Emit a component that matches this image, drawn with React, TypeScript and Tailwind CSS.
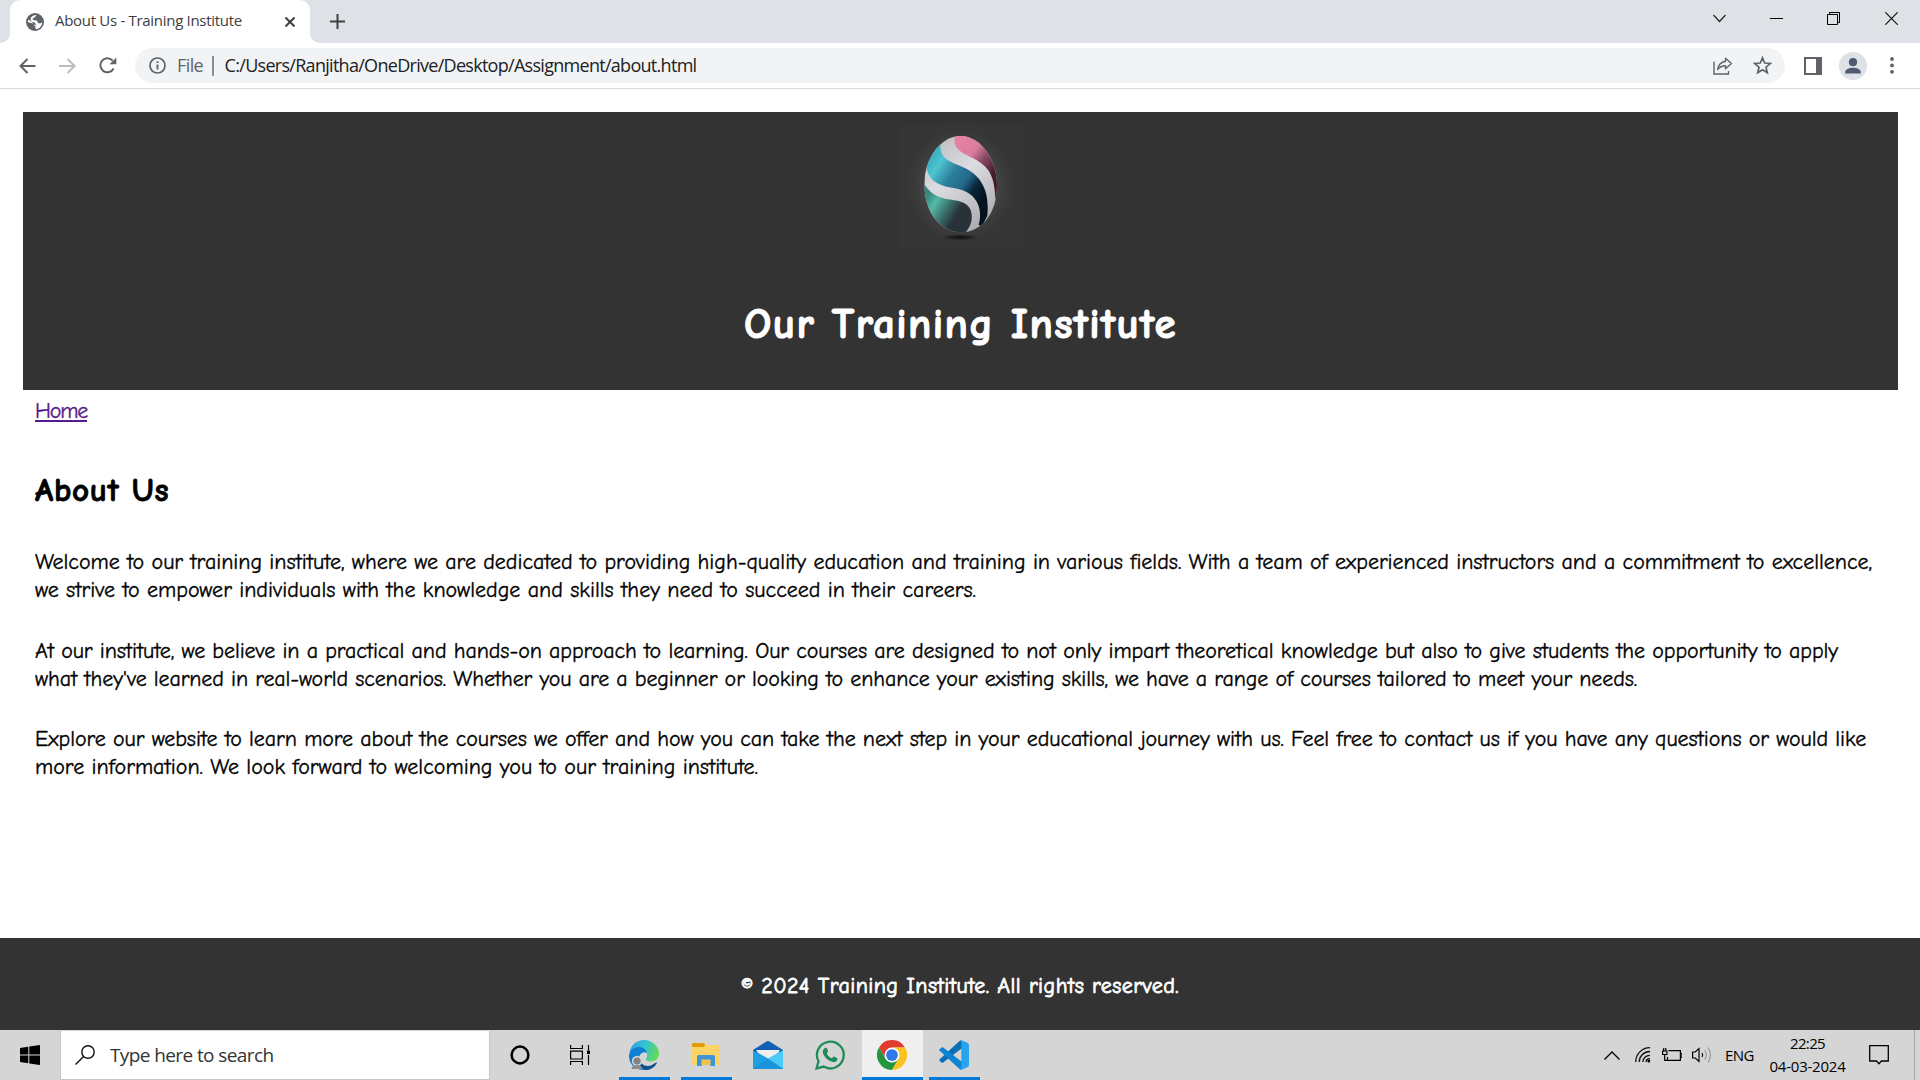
import React from "react";

const COMIC = "font-['Comic_Neue','Open_Sans',sans-serif]";

const paragraphs = [
  [
    {
      text: "Welcome to our training institute, where we are dedicated to providing high-quality education and training in various fields. With a team of experienced instructors and a commitment to excellence,",
      tracking: "tracking-[-0.031px]",
    },
    {
      text: "we strive to empower individuals with the knowledge and skills they need to succeed in their careers.",
      tracking: "tracking-[-0.004px]",
    },
  ],
  [
    {
      text: "At our institute, we believe in a practical and hands-on approach to learning. Our courses are designed to not only impart theoretical knowledge but also to give students the opportunity to apply",
      tracking: "tracking-[-0.091px]",
    },
    {
      text: "what they've learned in real-world scenarios. Whether you are a beginner or looking to enhance your existing skills, we have a range of courses tailored to meet your needs.",
      tracking: "tracking-[-0.115px]",
    },
  ],
  [
    {
      text: "Explore our website to learn more about the courses we offer and how you can take the next step in your educational journey with us. Feel free to contact us if you have any questions or would like",
      tracking: "tracking-[-0.068px]",
    },
    {
      text: "more information. We look forward to welcoming you to our training institute.",
      tracking: "tracking-[0.011px]",
    },
  ],
];

function TabStrip() {
  return (
    <div className="flex h-[43px] items-start bg-[#dee1e6]">
      <div className="h-[43px] w-[10px] bg-white">
        <div className="h-full rounded-br-[10px] bg-[#dee1e6]" />
      </div>
      <div className="flex h-[43px] w-[300px] items-center rounded-t-[10px] bg-white pl-4 pr-[15px]">
        <svg className="size-[18px] shrink-0" viewBox="0 0 18 18">
          <circle cx="9" cy="9" r="9" fill="#5f6368" />
          <path d="M10.6 1.9C9 3 9.8 4.2 7.8 4.8C6.2 5.2 6.6 6.6 7.4 7.1C8.6 7.8 10.2 7 11.2 8.2C12.2 9.3 11.4 10 12.6 10.2C14.6 10.4 15.2 9.6 16.2 9.4C15.9 13 13.4 15.8 9.8 16.2L9.3 13.6C8 13.4 8.7 11.2 7.2 10.6C5.2 9.8 3.6 9.6 1.8 9.2L2.2 6.6L6 9.3C7.4 9.5 6.7 11.3 8.4 11.6C9.8 11.9 9.6 13 10.6 13.3C9.9 10.5 8.8 9 6.2 8.7C4 8.3 4.4 5.4 5.4 3.9C7 2.4 8.8 1.9 10.6 1.9Z" fill="#fff" />
        </svg>
        <span className="ml-[11px] mt-[-3px] whitespace-nowrap text-[15px] leading-5 tracking-[-0.3px] text-[#3c4043]">
          About Us - Training Institute
        </span>
        <svg className="ml-auto size-[10px]" viewBox="0 0 10 10">
          <path d="M0.5 0.5L9.5 9.5M9.5 0.5L0.5 9.5" stroke="#3c4043" strokeWidth="2" />
        </svg>
      </div>
      <div className="h-[43px] w-[10px] bg-white">
        <div className="h-full rounded-bl-[10px] bg-[#dee1e6]" />
      </div>
      <svg className="ml-[10px] mt-[14px] size-[15px]" viewBox="0 0 15 15">
        <path d="M7.5 0V15M0 7.5H15" stroke="#3c4043" strokeWidth="2" />
      </svg>
      <svg className="ml-auto mt-[14px] h-[9px] w-[13px]" viewBox="0 0 13 9">
        <path d="M0.5 1L6.5 7.5L12.5 1" fill="none" stroke="#222" strokeWidth="1.2" />
      </svg>
      <div className="ml-[44px] mt-[18px] h-px w-[13px] bg-black" />
      <svg className="ml-[44px] mt-3 size-[13px]" viewBox="0 0 13 13">
        <path d="M2.5 2.5V0.5H12.5V10.5H10.5M0.5 2.5H10.5V12.5H0.5Z" fill="none" stroke="#000" />
      </svg>
      <svg className="ml-[45px] mr-[22px] mt-3 size-[13px]" viewBox="0 0 13 13">
        <path d="M0.3 0.3L12.7 12.7M12.7 0.3L0.3 12.7" stroke="#111" strokeWidth="1.2" />
      </svg>
    </div>
  );
}

function Toolbar() {
  return (
    <div className="flex h-[46px] items-center border-b border-[#d9dbde] bg-white pl-[19px]">
      <svg className="h-4 w-[17px]" viewBox="0 0 17 16" fill="none" stroke="#5f6368" strokeWidth="2">
        <path d="M16.5 8H2M8.5 1L1.5 8L8.5 15" />
      </svg>
      <svg className="ml-[23px] h-4 w-[17px]" viewBox="0 0 17 16" fill="none" stroke="#babcbe" strokeWidth="2">
        <path d="M0 8H15M8.5 1L15.5 8L8.5 15" />
      </svg>
      <svg className="ml-[23px] h-[17px] w-[18px]" viewBox="0 0 18 17">
        <path d="M14.6 11.5A7 7 0 1 1 13.6 3.6" fill="none" stroke="#5f6368" strokeWidth="2" />
        <path d="M17.3 0.5V7.3H10.5Z" fill="#5f6368" />
      </svg>
      <div className="ml-[18px] flex h-[35px] w-[1650px] items-center rounded-full bg-[#f1f3f4] pl-[14px] pr-[13px]">
        <svg className="size-[17px] shrink-0" viewBox="0 0 17 17">
          <circle cx="8.5" cy="8.5" r="7.5" fill="none" stroke="#5f6368" strokeWidth="1.7" />
          <path d="M8.5 7.5V12.5M8.5 4.3V6.1" stroke="#5f6368" strokeWidth="1.9" />
        </svg>
        <span className="-mt-px ml-[11px] text-[18px] leading-6 tracking-[-0.6px] text-[#5f6368]">File</span>
        <div className="ml-[9px] h-5 w-[1.5px] bg-[#8b8f93]" />
        <span className="-mt-px ml-[11px] whitespace-nowrap text-[18px] leading-6 tracking-[-0.71px] text-[#202124]">
          C:/Users/Ranjitha/OneDrive/Desktop/Assignment/about.html
        </span>
        <svg className="ml-auto h-[18px] w-5" viewBox="0 0 20 18" fill="none" stroke="#5f6368" strokeWidth="1.4">
          <path d="M1 4.5V17H15.5V14" />
          <path d="M12.5 1.2L18.5 6.5L12.5 11.8V8.8C9 8.8 6.5 10 4.6 12.6C5.2 8.2 8 5 12.5 4.2Z" strokeLinejoin="round" />
        </svg>
        <svg className="ml-5 size-[19px]" viewBox="0 0 19 19">
          <path d="M9.5 1.8L11.7 7L17.3 7.5L13 11.2L14.3 16.7L9.5 13.8L4.7 16.7L6 11.2L1.7 7.5L7.3 7Z" fill="none" stroke="#5f6368" strokeWidth="1.7" />
        </svg>
      </div>
      <div className="ml-[19px] flex h-[18px] w-[18px] border-2 border-r-[6px] border-[#5f6368]" />
      <svg className="ml-[17px] size-7" viewBox="0 0 28 28">
        <circle cx="14" cy="14" r="14" fill="#dee1e6" />
        <circle cx="14" cy="10.2" r="4.1" fill="#4f5b70" />
        <path d="M6.2 21.5V20C6.2 17.2 10.8 15.7 14 15.7S21.8 17.2 21.8 20V21.5Z" fill="#4f5b70" />
      </svg>
      <svg className="ml-[23px] h-[17px] w-1" viewBox="0 0 4 17" fill="#5f6368">
        <circle cx="2" cy="2" r="1.9" />
        <circle cx="2" cy="8.4" r="1.9" />
        <circle cx="2" cy="14.8" r="1.9" />
      </svg>
    </div>
  );
}

function EggLogo() {
  return (
    <svg className="size-[125px]" viewBox="114 72 375 375">
      <defs>
        <radialGradient id="glow">
          <stop offset="0" stopColor="#4a4a4a" />
          <stop offset="0.65" stopColor="#414141" />
          <stop offset="1" stopColor="#353536" stopOpacity="0" />
        </radialGradient>
        <linearGradient id="pink" x1="300" y1="130" x2="405" y2="215" gradientUnits="userSpaceOnUse">
          <stop offset="0" stopColor="#e580a2" />
          <stop offset="0.35" stopColor="#dd7d9d" />
          <stop offset="0.62" stopColor="#8a4a66" />
          <stop offset="1" stopColor="#421a2c" />
        </linearGradient>
        <linearGradient id="teal" x1="205" y1="175" x2="375" y2="290" gradientUnits="userSpaceOnUse">
          <stop offset="0" stopColor="#36aebd" />
          <stop offset="0.18" stopColor="#4fc3d0" />
          <stop offset="0.42" stopColor="#2b7f9c" />
          <stop offset="0.64" stopColor="#24678a" />
          <stop offset="0.8" stopColor="#08263b" />
          <stop offset="1" stopColor="#03131c" />
        </linearGradient>
        <linearGradient id="green" x1="200" y1="290" x2="290" y2="345" gradientUnits="userSpaceOnUse">
          <stop offset="0" stopColor="#36887b" />
          <stop offset="0.3" stopColor="#55b9a6" />
          <stop offset="0.6" stopColor="#3c7d75" />
          <stop offset="1" stopColor="#283238" />
        </linearGradient>
        <linearGradient id="band" x1="220" y1="120" x2="400" y2="380" gradientUnits="userSpaceOnUse">
          <stop offset="0" stopColor="#bcbcc1" />
          <stop offset="0.4" stopColor="#dddde1" />
          <stop offset="1" stopColor="#a4a5a9" />
        </linearGradient>
        <radialGradient id="shade">
          <stop offset="0" stopColor="#121212" />
          <stop offset="0.5" stopColor="#202020" />
          <stop offset="1" stopColor="#333" stopOpacity="0" />
        </radialGradient>
        <clipPath id="egg">
          <path d="M302 108C362 108 411 180 411 256C411 340 365 397 304 397C240 397 193 335 193 252C193 178 240 108 302 108Z" />
        </clipPath>
      </defs>
      <rect x="114" y="72" width="375" height="375" fill="#353536" />
      <ellipse cx="302" cy="255" rx="180" ry="190" fill="url(#glow)" />
      <ellipse cx="301" cy="412" rx="63" ry="10" fill="url(#shade)" />
      <g clipPath="url(#egg)">
        <rect x="190" y="100" width="225" height="300" fill="url(#band)" />
        <path d="M290 100C279 119 281 139 300 153C325 172 360 177 385 211C400 234 404 258 406 295L440 290V90Z" fill="url(#pink)" />
        <path d="M243 128C238 150 244 168 263 180C291 197 323 202 348 227C380 258 386 301 382 347L365 380L356 374C366 340 358 309 337 288C309 262 276 267 242 254C215 244 205 227 200 205L180 170Z" fill="url(#teal)" />
        <path d="M190 246C205 276 228 290 258 297C290 302 321 303 332 330C340 354 334 379 316 398L190 410Z" fill="url(#green)" />
      </g>
    </svg>
  );
}

function PageContent() {
  return (
    <div className={`flex h-[941px] flex-col bg-white text-black ${COMIC}`}>
      <header className="mx-[23px] mr-[22px] mt-[23px] flex h-[278px] flex-col items-center bg-[#333] pt-3">
        <EggLogo />
        <h1 className="mt-[47px] whitespace-nowrap text-[43px] font-bold leading-[56px] tracking-[1.34px] text-white [-webkit-text-stroke:1.1px_white]">
          Our Training Institute
        </h1>
      </header>
      <main className="flex-1 px-[35px] text-[22px] leading-7 [-webkit-text-stroke:0.35px_currentColor]">
        <a className="mt-[7px] block w-fit tracking-[-1.19px] text-[#551a8b] underline decoration-2 underline-offset-2">
          Home
        </a>
        <h2 className="mt-11 text-[33px] font-bold leading-[42px] tracking-[0.75px] [-webkit-text-stroke:0.8px_black]">
          About Us
        </h2>
        <div className="mt-[37px] flex flex-col gap-[32.5px]">
          {paragraphs.map((lines, i) => (
            <p key={i} className="whitespace-nowrap">
              {lines.map((line) => (
                <span key={line.text} className={`block ${line.tracking}`}>
                  {line.text}
                </span>
              ))}
            </p>
          ))}
        </div>
      </main>
      <footer className="flex h-[92px] items-center justify-center bg-[#333] pt-[3px] text-[22px] leading-7 tracking-[0.45px] text-white [-webkit-text-stroke:0.8px_white]">
        © 2024 Training Institute. All rights reserved.
      </footer>
    </div>
  );
}

function EdgeIcon() {
  return (
    <svg className="size-[30px]" viewBox="0 0 30 30">
      <defs>
        <linearGradient id="edgeTop" x1="0" y1="0.2" x2="1" y2="0.5">
          <stop offset="0" stopColor="#2a9fdc" />
          <stop offset="0.5" stopColor="#34c3d4" />
          <stop offset="1" stopColor="#62dc55" />
        </linearGradient>
      </defs>
      <path d="M0.5 13C1.5 5 8 0 15 0C23.5 0 30 6.5 30 13.5C30 18.5 26.5 21.5 22 21.5C18.5 21.5 16.5 20 17 18.5C18.5 17 18.5 15 17.5 13C14 8.5 6 7.5 0.5 13Z" fill="url(#edgeTop)" />
      <path d="M0 15C1.5 9 6 7 10.5 7C14.5 7 17.5 10 18 13C14 10.5 10 14 10 19C10 24.5 14 29 18 29.7C7 31.5 -0.5 24 0 15Z" fill="#0f7fd3" />
      <path d="M10.5 17C10 23 16 27.5 22 25.5C25 24.5 27 21.5 28 22.5C26 27.5 20.5 30.5 16.5 30C10.5 28.5 8 22 10.5 17Z" fill="#124f91" />
      <circle cx="8" cy="21" r="5.2" fill="#d4d4d4" />
      <circle cx="8" cy="21" r="3.6" fill="#858280" />
      <path d="M2.5 29C2.5 26 5 25 8 25S13 26 13 29Z" fill="#8e8b89" />
    </svg>
  );
}

function FolderIcon() {
  return (
    <svg className="h-6 w-7" viewBox="0 0 28 24">
      <path d="M0 1.5Q0 0 1.5 0H11.5Q13 0 13 2H26.5Q27.7 2 27.7 3.3V20.5Q27.7 22 26.2 22H1.5Q0 22 0 20.5Z" fill="#fdd365" />
      <path d="M0 1.5Q0 0 1.5 0H11.5Q13.2 0 13 2.5L11.5 4H0Z" fill="#e19d07" />
      <path d="M5 23V13.5Q5 12 6.5 12H21.5Q23 12 23 13.5V23H18.3V16.7H9.7V23Z" fill="#3f95d6" />
      <path d="M9.7 16.7H18.3V22H9.7Z" fill="#f3c348" />
    </svg>
  );
}

function MailIcon() {
  return (
    <svg className="h-7 w-[30px]" viewBox="0 0 30 28">
      <path d="M0 9L13.5 0.5Q15 -0.3 16.5 0.5L30 9V12H0Z" fill="#1060b4" />
      <path d="M1 9H29V12H1Z" fill="#0b428f" />
      <path d="M3 9H27L21 19H9Z" fill="#eee" />
      <path d="M0 9L15 17.5L30 27V28H0Z" fill="#1e9fe2" />
      <path d="M30 9L15 17.5L30 27.5Z" fill="#4acbf7" />
      <path d="M0 28L15 17.5L30 28Z" fill="#1b93dd" />
    </svg>
  );
}

function WhatsAppIcon() {
  return (
    <svg className="size-[30px]" viewBox="0 0 30 30">
      <path d="M1.5 28.5L3.5 21.3A13.4 13.4 0 1 1 8.6 26.6Z" fill="none" stroke="#1f8b57" strokeWidth="2.3" />
      <path d="M10.3 7.8C11 7.5 11.7 7.8 12 8.5L13 11C13.3 12 12 12.8 11.8 13.4C12.7 15.6 14.5 17.2 16.8 18.2C17.6 18 18.2 16.4 19.1 16.6L22 18C22.7 18.4 22.4 19.5 22.1 20.2C21.2 22 18.8 22.4 17 21.8C12.8 20.5 9.6 17.6 8 13.5C7.3 11.4 8.2 8.8 10.3 7.8Z" fill="#1f8b57" />
    </svg>
  );
}

function ChromeIcon() {
  return (
    <svg className="size-[30px]" viewBox="0 0 48 48">
      <path d="M24 12H44.8A24 24 0 0 0 3.2 12L13.6 30Z" fill="#e33b2e" />
      <path d="M13.6 30L3.2 12A24 24 0 0 0 24 48L34.4 30Z" fill="#24953f" />
      <path d="M34.4 30L24 48A24 24 0 0 0 44.8 12H24Z" fill="#fcc31e" />
      <circle cx="24" cy="24" r="12" fill="#fff" />
      <circle cx="24" cy="24" r="9.4" fill="#2f79ea" />
    </svg>
  );
}

function VSCodeIcon() {
  return (
    <svg className="size-[30px]" viewBox="0 0 30 30">
      <path d="M22 0.5L29 3.2V6L22.5 8.5L4.2 22.5Q3.4 23.2 2.5 22.5L0.7 21Q-0.2 20 0.7 19.2L20.5 1Z" fill="#0a6fb5" />
      <path d="M22 29.5L29 26.8V24L22.5 21.5L4.2 7.5Q3.4 6.8 2.5 7.5L0.7 9Q-0.2 10 0.7 10.8L20.5 29Z" fill="#0c84cf" />
      <path d="M22 0.1L29 3.2Q30 3.7 30 4.8V25.2Q30 26.3 29 26.8L22 29.9C21 30.2 20.8 29.3 22.3 28V2C20.8 0.7 21 -0.2 22 0.1Z" fill="#27a4f0" />
    </svg>
  );
}

function Taskbar() {
  return (
    <div className="flex h-[50px] bg-[#d5d5d5] text-black">
      <div className="flex w-[60px] items-center pl-5">
        <svg className="h-5 w-5" viewBox="0 0 20 20">
          <path d="M0 3L8.3 1.8V9.5H0ZM9.3 1.6L20 0V9.5H9.3ZM0 10.5H8.3V18.2L0 17ZM9.3 10.5H20V20L9.3 18.4Z" />
        </svg>
      </div>
      <div className="mt-px flex h-[49px] w-[430px] items-center border-x border-b border-[#c8c8c8] bg-white pl-[14px]">
        <svg className="size-5" viewBox="0 0 20 20" fill="none" stroke="#111" strokeWidth="1.4">
          <circle cx="13" cy="7" r="6.2" />
          <path d="M8.6 11.5L0.5 19.5" />
        </svg>
        <span className="ml-[15px] whitespace-nowrap text-[19px] leading-6 tracking-[-0.6px] text-[#333]">Type here to search</span>
      </div>
      <div className="flex w-[60px] items-center justify-center">
        <svg className="size-5" viewBox="0 0 20 20">
          <circle cx="10" cy="10" r="8.4" fill="none" stroke="#000" strokeWidth="2.5" />
        </svg>
      </div>
      <div className="flex w-[60px] items-center justify-center">
        <svg className="h-5 w-5" viewBox="0 0 20 20" fill="none" stroke="#000" strokeWidth="1.2">
          <path d="M0.6 0V3.5H12.4V0M0.6 6.2H12.4V14H0.6ZM0.6 20V16.5H12.4V20M18.5 0V5M18.5 10V20" />
          <path d="M17 5.5H20V9H17Z" fill="#000" stroke="none" />
        </svg>
      </div>
      <div className="ml-[9px] flex h-[50px] w-[51px] items-center border-b-[3px] border-[#0078d7] pl-[10px] pt-[3px]">
        <EdgeIcon />
      </div>
      <div className="ml-[11px] flex h-[50px] w-[51px] items-center border-b-[3px] border-[#0078d7] pl-[11px] pt-[2px]">
        <FolderIcon />
      </div>
      <div className="ml-[11px] flex h-[50px] w-[51px] items-center pl-[10px]">
        <MailIcon />
      </div>
      <div className="ml-[11px] flex h-[50px] w-[50px] items-center justify-center">
        <WhatsAppIcon />
      </div>
      <div className="ml-[7px] flex h-[50px] w-[61px] items-center border-b-[3px] border-[#0078d7] bg-[#efefef] pl-[15px] pt-[3px]">
        <ChromeIcon />
      </div>
      <div className="ml-[6px] flex h-[50px] w-[51px] items-center border-b-[3px] border-[#0078d7] pl-[10px] pt-[3px]">
        <VSCodeIcon />
      </div>
      <div className="ml-auto flex items-center">
        <svg className="h-[9px] w-4" viewBox="0 0 16 9">
          <path d="M0.5 8.5L8 1L15.5 8.5" fill="none" stroke="#000" strokeWidth="1.3" />
        </svg>
        <svg className="ml-[15px] size-4" viewBox="0 0 16 16" fill="none" stroke="#111" strokeWidth="1.3">
          <path d="M0.7 15C0.7 7 7 0.7 15 0.7M4.2 15C4.2 9 9 4.5 15 4.5M7.8 15C7.8 11 11 8.3 15 8.3M11 15C11 13 12.6 11.6 15 11.6" />
          <circle cx="13.8" cy="14" r="1.5" fill="#000" stroke="none" />
        </svg>
        <svg className="ml-[11px] h-[14px] w-5" viewBox="0 0 20 14" fill="none" stroke="#000" strokeWidth="1.2">
          <path d="M6.5 2.6H18.4V12.4H5.5V9M18.8 5.5H20V9.5H18.8" />
          <path d="M0.6 3V6.5H4.9V3ZM1.7 3V0M3.8 3V0M2.7 6.5V12.4H6" />
        </svg>
        <svg className="ml-[10px] h-[18px] w-[21px]" viewBox="0 0 21 18" fill="none" stroke="#000" strokeWidth="1.2">
          <path d="M0.6 6H3.2L7 2.6V15.4L3.2 12H0.6Z" />
          <path d="M10 7Q11.4 9 10 11" />
          <path d="M12.8 4.4Q16 9 12.8 13.6M16 1.5Q21 9 16 16.5" stroke="#999" />
        </svg>
        <span className="ml-3 w-[29px] text-[15px] leading-5 tracking-[-0.55px]">ENG</span>
        <div className="ml-[15px] mr-px flex w-[77px] flex-col items-center text-[15px] leading-[23px]">
          <span className="tracking-[-0.65px]">22:25</span>
          <span className="whitespace-nowrap tracking-[-0.23px]">04-03-2024</span>
        </div>
        <svg className="ml-[22px] h-5 w-5" viewBox="0 0 20 20">
          <path d="M0.7 0.7H19.3V16H12.5L10 18.7L7.5 16H0.7Z" fill="none" stroke="#000" strokeWidth="1.3" />
        </svg>
        <div className="ml-[25px] mr-[5px] h-[50px] w-px bg-[#a5a5a5]" />
      </div>
    </div>
  );
}

export default function App() {
  return (
    <div className="flex h-[1080px] w-[1920px] flex-col overflow-hidden bg-white font-['Open_Sans','Noto_Sans',sans-serif]">
      <TabStrip />
      <Toolbar />
      <PageContent />
      <Taskbar />
    </div>
  );
}
